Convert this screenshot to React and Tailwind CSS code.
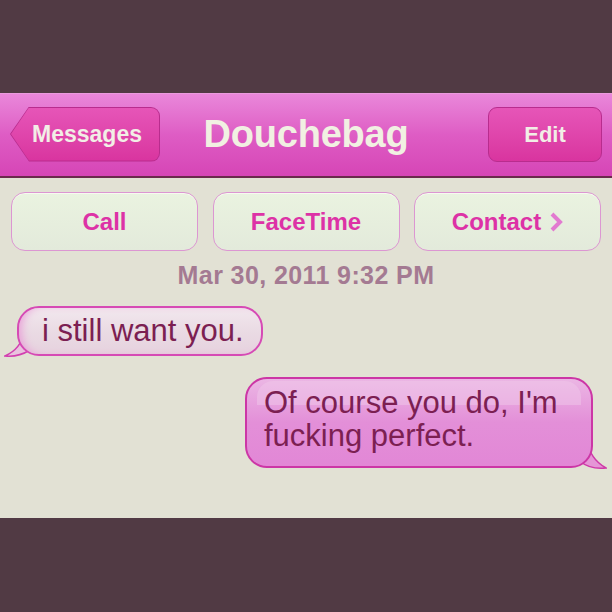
import React from "react";

const font = { fontFamily: '"Liberation Sans", Arial, sans-serif' };

const ActionButton = ({ label, chevron }) => (
  <div className="flex h-[59px] w-[187px] items-center justify-center gap-2 rounded-[14px] border border-[#dc96d2] bg-gradient-to-b from-[#eaf3e0] to-[#e3eadb] shadow-[inset_0_1px_0_#f6fbf0]">
    <span className="text-[24px] font-bold text-[#dd32a6]">{label}</span>
    {chevron && (
      <svg width="14" height="20" viewBox="0 0 14 20" className="mt-[1px]">
        <path d="M3 2 L11 10 L3 18" fill="none" stroke="#e27ad0" strokeWidth="4" strokeLinejoin="miter" />
      </svg>
    )}
  </div>
);

export default function App() {
  return (
    <div className="flex h-[612px] w-[612px] flex-col bg-[#513a44]" style={font}>
      <div className="h-[93px]" />

      {/* nav bar */}
      <div className="relative grid h-[85px] grid-cols-[1fr_auto_1fr] items-center border-t border-[#ea9ade] border-b-2 border-b-[#6b2a4c] bg-gradient-to-b from-[#e987da] via-[#de5cc4] to-[#d645b6] px-[10px] pb-[2px]">
        <div className="flex justify-start">
          <div className="h-[55px] w-[150px] rounded-r-[9px] bg-[#b92c8e] p-[1px] [clip-path:polygon(19px_0,100%_0,100%_100%,19px_100%,0_50%)]">
            <div className="flex h-full w-full items-center justify-center rounded-r-[8px] bg-gradient-to-b from-[#e655b8] to-[#d9349f] pl-[4px] [clip-path:polygon(18px_0,100%_0,100%_100%,18px_100%,0_50%)]">
              <span className="text-[23px] font-bold text-[#f2eee6]">Messages</span>
            </div>
          </div>
        </div>
        <h1 className="px-4 text-[38px] font-bold tracking-[-0.2px] text-[#f1f0e2]">Douchebag</h1>
        <div className="flex justify-end">
          <div className="flex h-[55px] w-[114px] items-center justify-center rounded-[9px] border border-[#b92c8e] bg-gradient-to-b from-[#e655b8] to-[#d9349f]">
            <span className="text-[22px] font-bold text-[#f2eee6]">Edit</span>
          </div>
        </div>
      </div>

      {/* content */}
      <div className="flex h-[340px] flex-col bg-[#e2e1d4]">
        <div className="mt-[14px] flex justify-between px-[11px]">
          <ActionButton label="Call" />
          <ActionButton label="FaceTime" />
          <ActionButton label="Contact" chevron />
        </div>

        <div className="mt-[6px] text-center text-[25px] font-bold tracking-[0.4px] text-[#a47a92]">
          Mar 30, 2011 9:32 PM
        </div>

        {/* received */}
        <div className="relative ml-[17px] mt-[11px] w-[246px]">
          <svg className="absolute bottom-[-2px] left-[-13px]" width="30" height="26" viewBox="0 0 30 26">
            <path d="M20 0 C18 12 10 20 1 24 C10 25 18 23 26 18 Z" fill="#e9c2de" stroke="#d23fb0" strokeWidth="1.5" />
          </svg>
          <div className="relative flex h-[50px] items-center rounded-[22px] border-2 border-[#d64ab5] bg-gradient-to-b from-[#f2e8ee] via-[#eadbe4] to-[#e6d2de] pl-[23px] shadow-[inset_6px_0_10px_-4px_#e89ad6]">
            <span className="text-[31px] leading-none text-[#7c1f52]">i still want you.</span>
          </div>
        </div>

        {/* sent */}
        <div className="relative ml-[245px] mt-[21px] w-[348px]">
          <svg className="absolute bottom-[-2px] right-[-14px]" width="30" height="30" viewBox="0 0 30 30">
            <path d="M10 0 C12 14 20 23 29 28 C18 29 10 27 4 22 Z" fill="#e596d6" stroke="#cf3aa8" strokeWidth="1.5" />
          </svg>
          <div className="relative overflow-hidden rounded-[22px] border-2 border-[#cc36a6] bg-gradient-to-b from-[#ebb6e4] via-[#e38fd8] to-[#e287d6] pb-[14px] pt-[7px] pl-[17px] pr-[8px]">
            <div className="absolute left-[10px] right-[10px] top-[2px] h-[24px] rounded-t-[16px] bg-[#f0c8ea]/50" />
            <p className="relative text-[31px] leading-[33px] text-[#7c1f52]">
              Of course you do, I'm
              <br />
              fucking perfect.
            </p>
          </div>
        </div>
      </div>

      <div className="flex-1" />
    </div>
  );
}
